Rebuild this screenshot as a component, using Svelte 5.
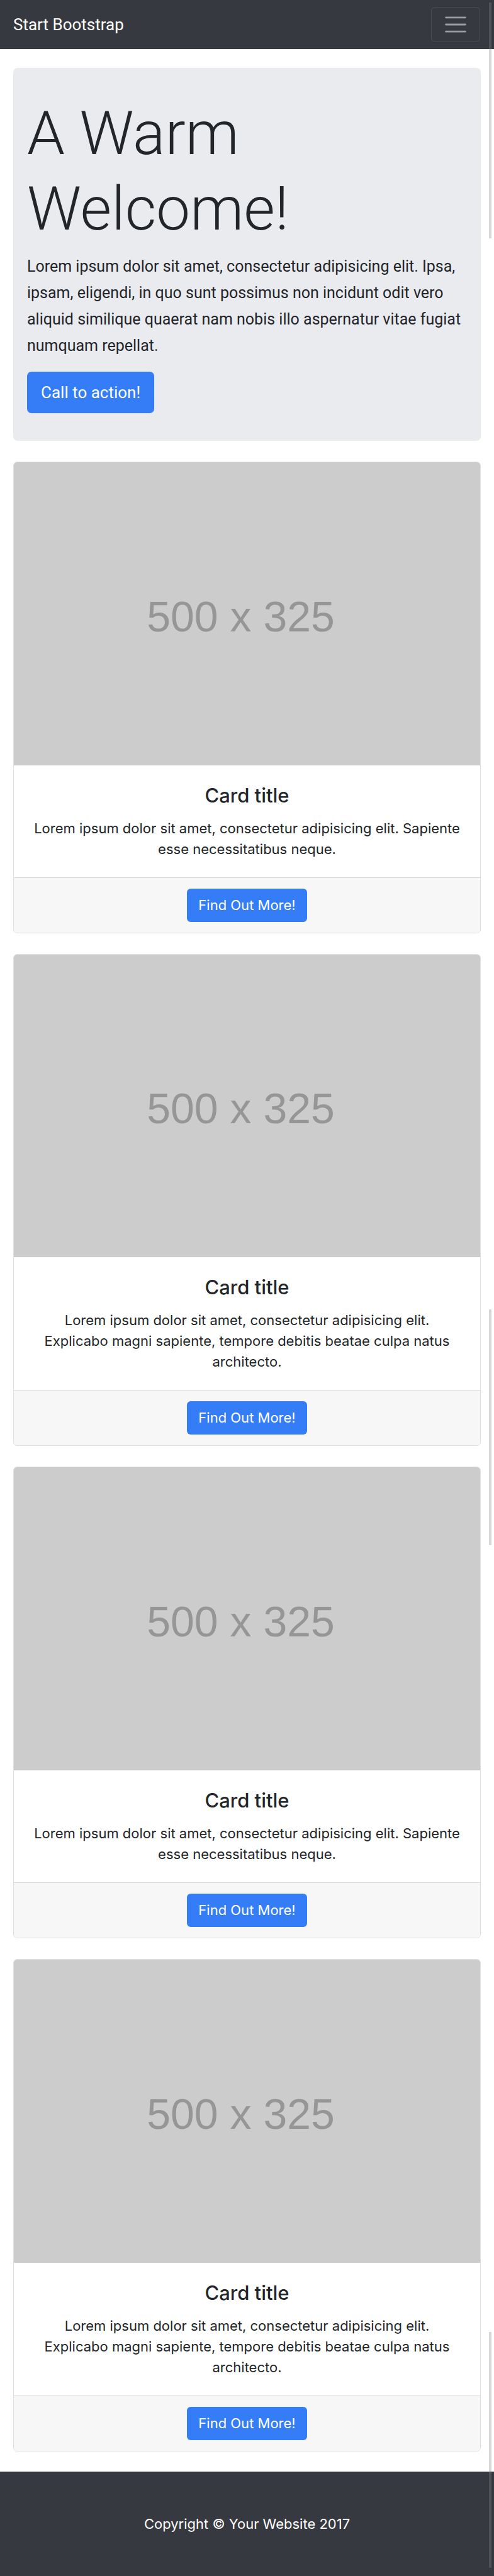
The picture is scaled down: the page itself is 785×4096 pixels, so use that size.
<script>
  const short =
    'Lorem ipsum dolor sit amet, consectetur adipisicing elit. Sapiente esse necessitatibus neque.';
  const long =
    'Lorem ipsum dolor sit amet, consectetur adipisicing elit. Explicabo magni sapiente, tempore debitis beatae culpa natus architecto.';
  const cards = [short, long, short, long];
</script>

<div class="page">
  <nav>
    <a class="brand" href="#top">Start Bootstrap</a>
    <button class="toggler" type="button" aria-label="Toggle navigation">
      <svg viewBox="0 0 30 30" aria-hidden="true">
        <path d="M4 7h22M4 15h22M4 23h22" />
      </svg>
    </button>
  </nav>

  <main id="top">
    <header class="hero">
      <h1>A Warm Welcome!</h1>
      <p>
        Lorem ipsum dolor sit amet, consectetur adipisicing elit. Ipsa, ipsam, eligendi, in quo sunt
        possimus non incidunt odit vero aliquid similique quaerat nam nobis illo aspernatur vitae
        fugiat numquam repellat.
      </p>
      <a class="btn large" href="#cards">Call to action!</a>
    </header>

    <section class="cards" id="cards">
      {#each cards as text}
        <article class="card">
          <div class="thumb"><span>500 x 325</span></div>
          <div class="body">
            <h2>Card title</h2>
            <p>{text}</p>
          </div>
          <div class="foot">
            <a class="btn" href="#cards">Find Out More!</a>
          </div>
        </article>
      {/each}
    </section>
  </main>

  <footer><p>Copyright © Your Website 2017</p></footer>

  <i class="scroll first"></i>
  <i class="scroll second"></i>
  <i class="scroll third"></i>
</div>

<style>
  .page {
    position: relative;
    display: flex;
    flex-direction: column;
    min-height: 100vh;
    background: #fff;
    color: #222529;
    font: 400 22px/33px Inter, 'Liberation Sans', sans-serif;
  }
  .page * {
    box-sizing: border-box;
  }
  h1,
  h2,
  p {
    margin: 0;
  }
  nav {
    display: flex;
    align-items: center;
    justify-content: space-between;
    padding: 11px 22px 11px 21px;
    background: #373940;
  }
  .brand {
    color: #fff;
    font-family: Roboto, 'Liberation Sans', sans-serif;
    font-size: 26px;
    line-height: 42px;
    text-decoration: none;
  }
  .toggler {
    display: flex;
    padding: 6px 17px;
    border: 1px solid #4b4c50;
    border-radius: 6px;
    background: transparent;
  }
  .toggler svg {
    width: 42px;
    height: 42px;
    fill: none;
    stroke: #9b9ca0;
    stroke-width: 2;
    stroke-linecap: round;
  }
  main {
    padding: 30px 21px 32px;
  }
  .hero {
    padding: 44px 22px;
    border-radius: 7px;
    background: #eaebef;
    font-family: Roboto, 'Liberation Sans', sans-serif;
  }
  h1 {
    max-width: 600px;
    margin-bottom: 11px;
    font-size: 96px;
    line-height: 120px;
    font-weight: 300;
  }
  .hero p {
    margin-bottom: 20px;
    font-size: 25px;
    line-height: 42px;
  }
  .btn {
    display: inline-block;
    padding: 10px 18px;
    border-radius: 6px;
    background: #357df7;
    color: #fff;
    text-decoration: none;
    vertical-align: top;
  }
  .btn.large {
    padding: 12px 22px;
    border-radius: 7px;
    font-size: 26px;
    line-height: 42px;
  }
  .cards {
    display: grid;
    gap: 33px;
    margin-top: 33px;
  }
  .card {
    overflow: hidden;
    border: 1px solid #dfdfdf;
    border-radius: 6px;
    text-align: center;
  }
  .thumb {
    display: flex;
    align-items: center;
    justify-content: center;
    aspect-ratio: 500 / 325;
    padding: 8px 20px 0 0;
    background: #ccc;
    color: #969696;
    font: 68px/80px 'Liberation Sans Narrow', 'Liberation Sans', sans-serif;
  }
  .body {
    padding: 28px;
  }
  h2 {
    margin-bottom: 16px;
    font-size: 31px;
    line-height: 40px;
    font-weight: 500;
  }
  .foot {
    padding: 17px 28px;
    border-top: 1px solid #d8d8d8;
    background: #f7f7f7;
  }
  footer {
    flex-grow: 1;
    padding: 67px 21px 66px;
    background: #373940;
    color: #fff;
    text-align: center;
  }
  /* Overlay scroll thumbs along the right edge */
  .scroll {
    position: absolute;
    right: 4px;
    width: 4px;
    background: rgba(133, 133, 133, 0.32);
  }
  .first {
    top: 4px;
    height: 375px;
  }
  .second {
    top: 2082px;
    height: 375px;
  }
  .third {
    bottom: 13px;
    height: 375px;
  }
</style>
